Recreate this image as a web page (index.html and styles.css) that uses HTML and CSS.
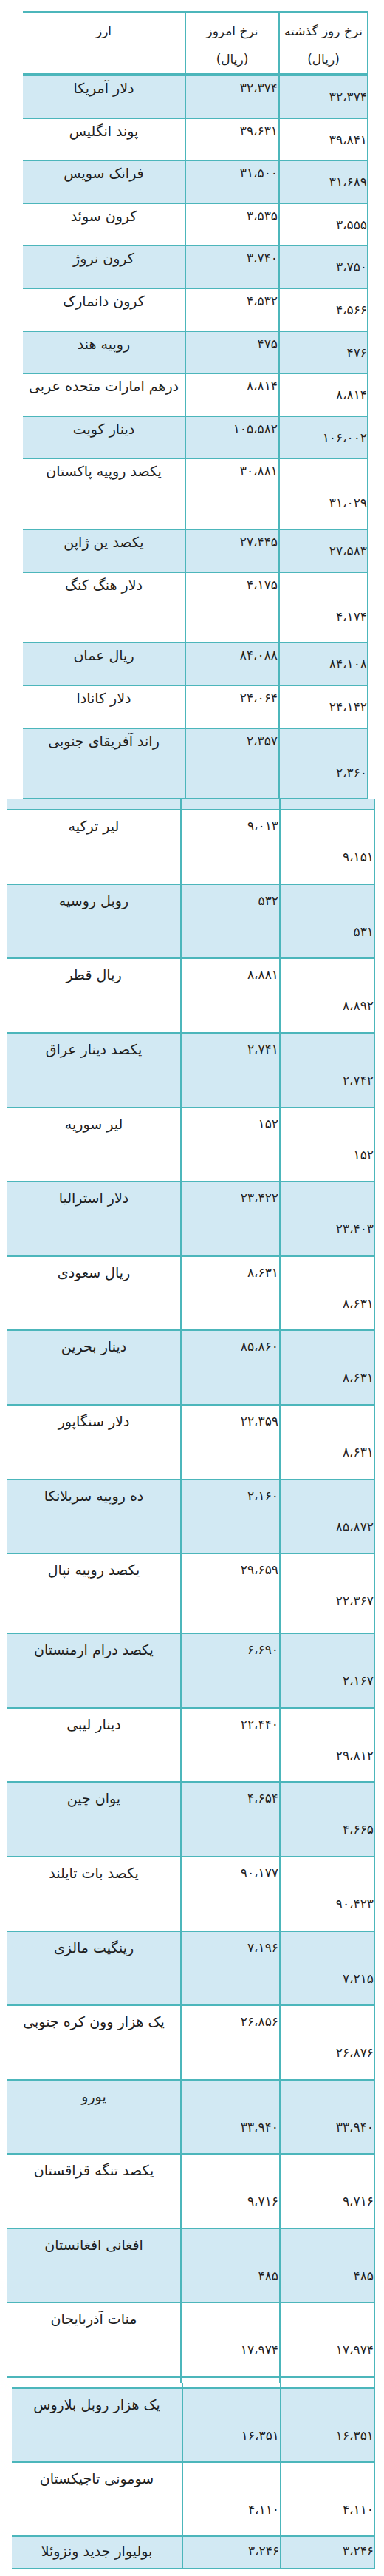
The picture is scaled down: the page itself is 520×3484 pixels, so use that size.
FILE: index.html
```html
<!DOCTYPE html>
<html lang="fa">
<head>
<meta charset="utf-8">
<title>نرخ ارز</title>
<link rel="stylesheet" href="styles.css">
</head>
<body>
<div class="sheet">

<div class="tbl t1">
  <div class="row head">
    <div class="cell name">ارز</div>
    <div class="cell today">نرخ امروز<br>(ریال)</div>
    <div class="cell yest">نرخ روز گذشته<br>(ریال)</div>
  </div>
  <div class="row blue"><div class="cell name">دلار آمریکا</div><div class="cell today">۳۲،۳۷۴</div><div class="cell yest">۳۲،۳۷۴</div></div>
  <div class="row"><div class="cell name">پوند انگلیس</div><div class="cell today">۳۹،۶۳۱</div><div class="cell yest">۳۹،۸۴۱</div></div>
  <div class="row blue"><div class="cell name">فرانک سویس</div><div class="cell today">۳۱،۵۰۰</div><div class="cell yest">۳۱،۶۸۹</div></div>
  <div class="row"><div class="cell name">کرون سوئد</div><div class="cell today">۳،۵۳۵</div><div class="cell yest">۳،۵۵۵</div></div>
  <div class="row blue"><div class="cell name">کرون نروژ</div><div class="cell today">۳،۷۴۰</div><div class="cell yest">۳،۷۵۰</div></div>
  <div class="row"><div class="cell name">کرون دانمارک</div><div class="cell today">۴،۵۳۲</div><div class="cell yest">۴،۵۶۶</div></div>
  <div class="row blue"><div class="cell name">روپیه هند</div><div class="cell today">۴۷۵</div><div class="cell yest">۴۷۶</div></div>
  <div class="row"><div class="cell name">درهم امارات متحده عربی</div><div class="cell today">۸،۸۱۴</div><div class="cell yest">۸،۸۱۴</div></div>
  <div class="row blue"><div class="cell name">دینار کویت</div><div class="cell today">۱۰۵،۵۸۲</div><div class="cell yest">۱۰۶،۰۰۲</div></div>
  <div class="row tall"><div class="cell name">یکصد روپیه پاکستان</div><div class="cell today">۳۰،۸۸۱</div><div class="cell yest">۳۱،۰۲۹</div></div>
  <div class="row blue"><div class="cell name">یکصد ین ژاپن</div><div class="cell today">۲۷،۴۴۵</div><div class="cell yest">۲۷،۵۸۳</div></div>
  <div class="row tall"><div class="cell name">دلار هنگ کنگ</div><div class="cell today">۴،۱۷۵</div><div class="cell yest">۴،۱۷۴</div></div>
  <div class="row blue"><div class="cell name">ریال عمان</div><div class="cell today">۸۴،۰۸۸</div><div class="cell yest">۸۴،۱۰۸</div></div>
  <div class="row"><div class="cell name">دلار کانادا</div><div class="cell today">۲۴،۰۶۴</div><div class="cell yest">۲۴،۱۴۲</div></div>
  <div class="row blue tall"><div class="cell name">راند آفریقای جنوبی</div><div class="cell today">۲،۳۵۷</div><div class="cell yest">۲،۳۶۰</div></div>
</div>

<div class="tbl t2">
  <div class="row strip blue"><div class="cell name"></div><div class="cell today"></div><div class="cell yest"></div></div>
  <div class="row"><div class="cell name">لیر ترکیه</div><div class="cell today">۹،۰۱۳</div><div class="cell yest">۹،۱۵۱</div></div>
  <div class="row blue"><div class="cell name">روبل روسیه</div><div class="cell today">۵۳۲</div><div class="cell yest">۵۳۱</div></div>
  <div class="row"><div class="cell name">ریال قطر</div><div class="cell today">۸،۸۸۱</div><div class="cell yest">۸،۸۹۲</div></div>
  <div class="row blue"><div class="cell name">یکصد دینار عراق</div><div class="cell today">۲،۷۴۱</div><div class="cell yest">۲،۷۴۲</div></div>
  <div class="row"><div class="cell name">لیر سوریه</div><div class="cell today">۱۵۲</div><div class="cell yest">۱۵۲</div></div>
  <div class="row blue"><div class="cell name">دلار استرالیا</div><div class="cell today">۲۳،۴۲۲</div><div class="cell yest">۲۳،۴۰۳</div></div>
  <div class="row"><div class="cell name">ریال سعودی</div><div class="cell today">۸،۶۳۱</div><div class="cell yest">۸،۶۳۱</div></div>
  <div class="row blue"><div class="cell name">دینار بحرین</div><div class="cell today">۸۵،۸۶۰</div><div class="cell yest">۸،۶۳۱</div></div>
  <div class="row"><div class="cell name">دلار سنگاپور</div><div class="cell today">۲۲،۳۵۹</div><div class="cell yest">۸،۶۳۱</div></div>
  <div class="row blue"><div class="cell name">ده روپیه سریلانکا</div><div class="cell today">۲،۱۶۰</div><div class="cell yest">۸۵،۸۷۲</div></div>
  <div class="row long"><div class="cell name">یکصد روپیه نپال</div><div class="cell today">۲۹،۶۵۹</div><div class="cell yest">۲۲،۳۶۷</div></div>
  <div class="row blue"><div class="cell name">یکصد درام ارمنستان</div><div class="cell today">۶،۶۹۰</div><div class="cell yest">۲،۱۶۷</div></div>
  <div class="row"><div class="cell name">دینار لیبی</div><div class="cell today">۲۲،۴۴۰</div><div class="cell yest">۲۹،۸۱۲</div></div>
  <div class="row blue"><div class="cell name">یوان چین</div><div class="cell today">۴،۶۵۴</div><div class="cell yest">۴،۶۶۵</div></div>
  <div class="row"><div class="cell name">یکصد بات تایلند</div><div class="cell today">۹۰،۱۷۷</div><div class="cell yest">۹۰،۴۲۳</div></div>
  <div class="row blue"><div class="cell name">رینگیت مالزی</div><div class="cell today">۷،۱۹۶</div><div class="cell yest">۷،۲۱۵</div></div>
  <div class="row"><div class="cell name">یک هزار وون کره جنوبی</div><div class="cell today">۲۶،۸۵۶</div><div class="cell yest">۲۶،۸۷۶</div></div>
  <div class="row blue low"><div class="cell name">یورو</div><div class="cell today">۳۳،۹۴۰</div><div class="cell yest">۳۳،۹۴۰</div></div>
  <div class="row low"><div class="cell name">یکصد تنگه قزاقستان</div><div class="cell today">۹،۷۱۶</div><div class="cell yest">۹،۷۱۶</div></div>
  <div class="row blue low"><div class="cell name">افغانی افغانستان</div><div class="cell today">۴۸۵</div><div class="cell yest">۴۸۵</div></div>
  <div class="row low"><div class="cell name">منات آذربایجان</div><div class="cell today">۱۷،۹۷۴</div><div class="cell yest">۱۷،۹۷۴</div></div>
  <div class="row tail"><div class="cell name"></div><div class="cell today"></div><div class="cell yest"></div></div>
</div>

<div class="tbl t3">
  <div class="row strip"><div class="cell name"></div><div class="cell today"></div><div class="cell yest"></div></div>
  <div class="row blue low"><div class="cell name">یک هزار روبل بلاروس</div><div class="cell today">۱۶،۳۵۱</div><div class="cell yest">۱۶،۳۵۱</div></div>
  <div class="row low"><div class="cell name">سومونی تاجیکستان</div><div class="cell today">۴،۱۱۰</div><div class="cell yest">۴،۱۱۰</div></div>
  <div class="row blue short"><div class="cell name">بولیوار جدید ونزوئلا</div><div class="cell today">۳،۲۴۶</div><div class="cell yest">۳،۲۴۶</div></div>
</div>

</div>
</body>
</html>
```

FILE: styles.css
```css
* { box-sizing: border-box; }

html, body {
  margin: 0;
  padding: 0;
  background: #ffffff;
}

.sheet {
  width: 520px;
  padding: 15px 0 9px 0;
  font-family: "DejaVu Sans", sans-serif;
  font-size: 17px;
  color: #1e1e1e;
}

.tbl {
  display: flex;
  flex-direction: column;
}

.t1 { margin-left: 31px; width: 468px; --cols: 219px 127px 122px; --lh: 32px; --pt: 0px; --yp: 12px; }
.t2 { margin-left: 10px; width: 498px; --cols: 234px 134px 130px; --lh: 34px; --pt: 4px; --yp: 46px; }
.t3 { margin-left: 16px; width: 492px; --cols: 230px 133px 129px; --lh: 34px; --pt: 4px; --yp: 46px; }

.row {
  display: grid;
  grid-template-columns: var(--cols);
  border-bottom: 2px solid #4cb6bb;
  background: #ffffff;
}

.row.blue { background: #d2e9f3; }

.cell {
  direction: rtl;
  line-height: var(--lh);
  padding-top: var(--pt);
  white-space: nowrap;
}

.cell.name {
  text-align: center;
  font-size: 19px;
}

.cell.today {
  border-left: 2px solid #4cb6bb;
  text-align: right;
  padding-right: 1px;
}

.cell.yest {
  border-left: 2px solid #4cb6bb;
  border-right: 2px solid #4cb6bb;
  text-align: right;
  padding-right: 0;
  padding-top: var(--yp);
}

.t1 .row { height: 57.6px; }
.t1 .row.tall { height: 95.7px; }
.t1 .row.tall .yest { padding-top: 43px; }

.t1 .row.head {
  height: 88px;
  border-top: 2px solid #4cb6bb;
  border-bottom: 4px solid #4cb6bb;
}

.t1 .row.head .cell {
  line-height: 38px;
  padding-top: 6px;
  padding-right: 0;
  text-align: center;
  font-size: 17px;
}

.t2 .row { height: 100.6px; }
.t2 .row.long { height: 108px; }
.t2 .row.strip { height: 15px; }
.t2 .row.tail { height: 7px; border-bottom: none; }

.t3 .row { height: 100px; }
.t3 .row.strip { height: 8px; }
.t3 .row.short { height: 44px; }
.t3 .row.short .cell { padding-top: 2px; }

.row.low .today { padding-top: var(--yp); }
.row.strip .cell, .row.tail .cell { padding: 0; }
```
